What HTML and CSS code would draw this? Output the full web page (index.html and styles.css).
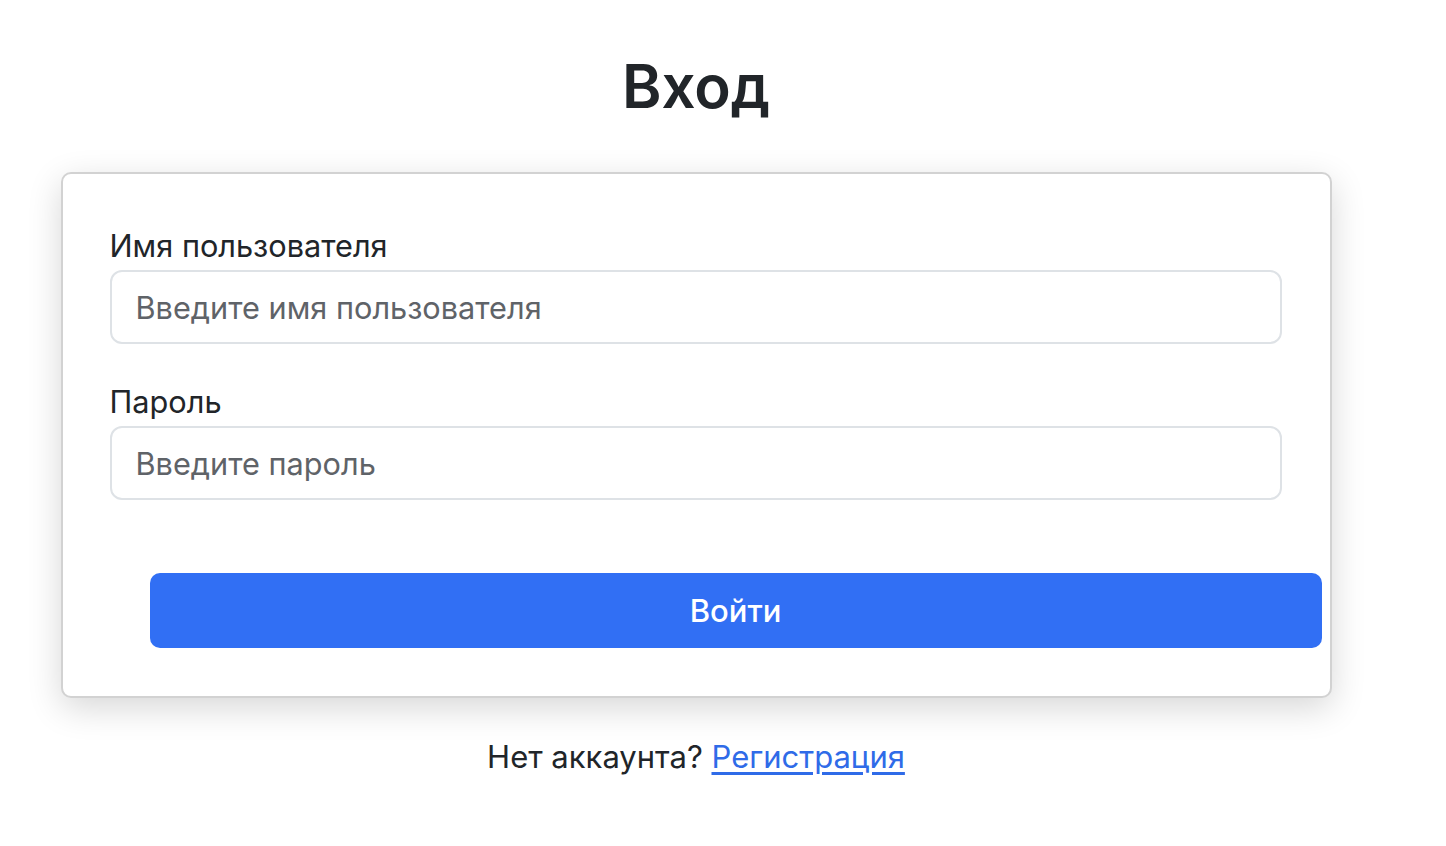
FILE: index.html
```html
<!DOCTYPE html>
<html lang="ru">
<head>
<meta charset="utf-8">
<title>Вход</title>
<link rel="stylesheet" href="styles.css">
</head>
<body>
<div class="page">
  <h1 class="title">Вход</h1>
  <form class="card">
    <div class="field">
      <label class="label" for="username">Имя пользователя</label>
      <input class="input" id="username" type="text" placeholder="Введите имя пользователя">
    </div>
    <div class="field">
      <label class="label" for="password">Пароль</label>
      <input class="input" id="password" type="password" placeholder="Введите пароль">
    </div>
    <button class="btn" type="button">Войти</button>
  </form>
  <p class="footer">Нет аккаунта? <a class="link" href="#">Регистрация</a></p>
</div>
</body>
</html>
```

FILE: styles.css
```css
html, body {
  margin: 0;
  padding: 0;
  background: #ffffff;
}
body {
  font-family: Inter, "Liberation Sans", Arial, sans-serif;
  color: #212529;
}
.page {
  width: 1392px;
  display: flex;
  flex-direction: column;
  align-items: center;
}
.title {
  margin: 48px 0 0;
  font-size: 60px;
  font-weight: 600;
  line-height: 76px;
  color: #212529;
}
.card {
  box-sizing: border-box;
  margin-top: 48px;
  width: 1271px;
  border: 2px solid #d2d2d2;
  border-radius: 10px;
  background: #fff;
  box-shadow: 0 10px 34px rgba(0, 0, 0, 0.16);
  padding: 51px 48px 48px 47px;
  display: flex;
  flex-direction: column;
}
.field {
  display: flex;
  flex-direction: column;
  margin-bottom: 37px;
}
.field + .field {
  margin-bottom: 73px;
}
.label {
  font-size: 30.7px;
  line-height: 42px;
  margin-bottom: 3px;
  color: #212529;
}
.input {
  box-sizing: border-box;
  height: 74px;
  width: 100%;
  border: 2px solid #dee2e6;
  border-radius: 12px;
  padding: 0 24px;
  font-family: inherit;
  font-size: 30.7px;
  color: #212529;
  background: #fff;
  outline: none;
}
.input::placeholder {
  color: #5f6368;
  opacity: 1;
}
.btn {
  box-sizing: border-box;
  margin-left: 40px;
  width: 100%;
  height: 75px;
  border: none;
  border-radius: 10px;
  background: #316ff4;
  color: #fff;
  font-family: inherit;
  font-size: 31px;
  font-weight: 500;
  cursor: pointer;
}
.footer {
  margin: 38px 0 0;
  font-size: 31px;
  line-height: 42px;
  color: #212529;
}
.link {
  color: #2f6be8;
  text-decoration: underline;
  text-underline-offset: 4px;
}
```
